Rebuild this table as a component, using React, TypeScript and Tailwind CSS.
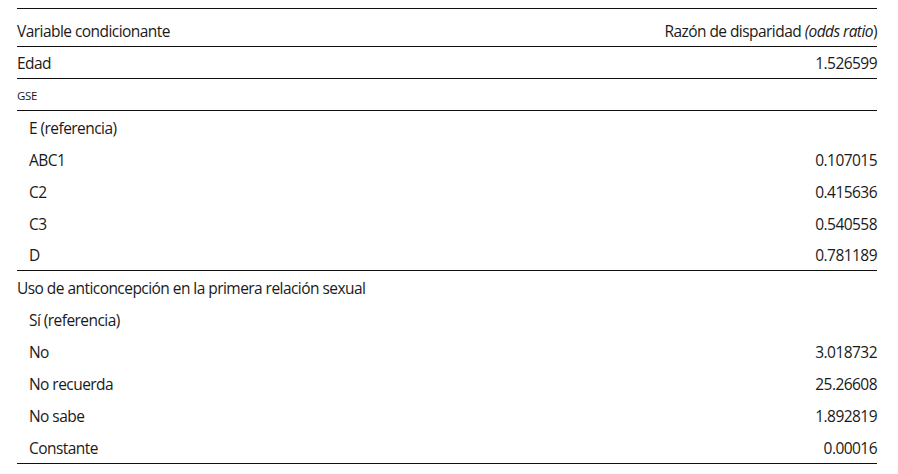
import React from "react";

type Row = { label: string; value?: string; indent?: boolean; small?: boolean; border?: boolean };

const rows: Row[] = [
  { label: "Edad", value: "1.526599", border: true },
  { label: "GSE", small: true, border: true },
  { label: "E (referencia)", indent: true },
  { label: "ABC1", value: "0.107015", indent: true },
  { label: "C2", value: "0.415636", indent: true },
  { label: "C3", value: "0.540558", indent: true },
  { label: "D", value: "0.781189", indent: true, border: true },
  { label: "Uso de anticoncepción en la primera relación sexual" },
  { label: "Sí (referencia)", indent: true },
  { label: "No", value: "3.018732", indent: true },
  { label: "No recuerda", value: "25.26608", indent: true },
  { label: "No sabe", value: "1.892819", indent: true },
  { label: "Constante", value: "0.00016", indent: true },
];

export default function App() {
  return (
    <div className="w-[898px] h-[474px] bg-white pt-[8px] text-[#1a1a1a]" style={{ fontFamily: "'Open Sans', sans-serif" }}>
      <div className="ml-[17px] w-[860px] border-t border-b border-[#111]">
        <div className="h-[38px] pt-[8px] flex items-center justify-between border-b border-[#111] text-[15.5px] tracking-[-0.55px]">
          <span>Variable condicionante</span>
          <span>
            Razón de disparidad <i>(odds ratio</i>)
          </span>
        </div>
        {rows.map((r, i) => (
          <div
            key={i}
            className={`h-[32px] pt-[3px] flex items-center justify-between tracking-[-0.55px] ${r.border ? "border-b border-[#111]" : ""}`}
          >
            <span className={`${r.indent ? "pl-[12px]" : ""} ${r.small ? "text-[11.5px] tracking-[-0.3px]" : "text-[15.5px]"}`}>{r.label}</span>
            <span className="text-[15.5px]">{r.value}</span>
          </div>
        ))}
      </div>
    </div>
  );
}
